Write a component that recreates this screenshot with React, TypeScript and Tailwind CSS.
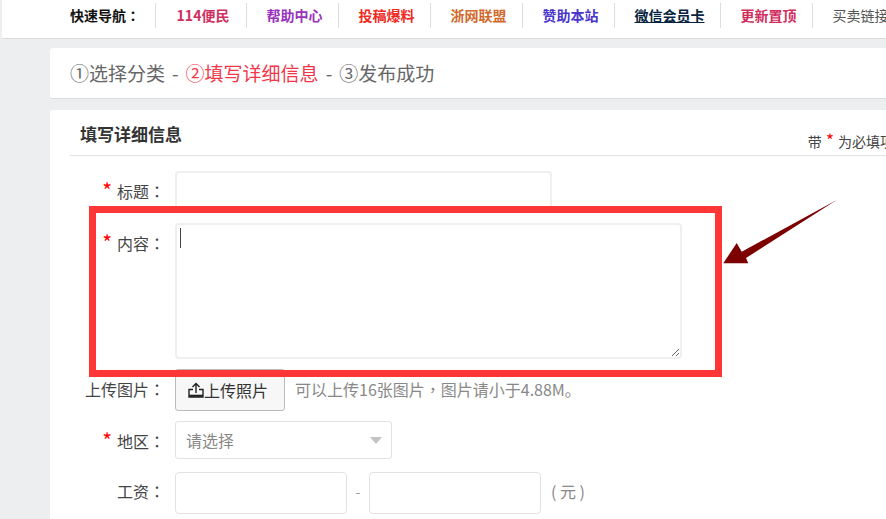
const font = { fontFamily: '"Noto Sans CJK SC", "Liberation Sans", sans-serif' };
const tc = { fontFamily: '"Noto Sans CJK TC", sans-serif' };

const navItems: { label: string; cls: string }[] = [
  { label: "114便民", cls: "font-bold text-[#d0305f] w-[91px]" },
  { label: "帮助中心", cls: "font-bold text-[#9933bb] w-[92px]" },
  { label: "投稿爆料", cls: "font-bold text-[#f02a1d] w-[92px]" },
  { label: "浙网联盟", cls: "font-bold text-[#d2692c] w-[92px]" },
  { label: "赞助本站", cls: "font-bold text-[#4a35cc] w-[92px]" },
  { label: "微信会员卡", cls: "font-bold text-[#06233f] underline w-[106px]" },
  { label: "更新置顶", cls: "font-bold text-[#d12c5c] w-[92px]" },
  { label: "买卖链接", cls: "text-[#555555] w-[92px]" },
];

function Label({ text, required }: { text: string; required?: boolean }) {
  return (
    <div className="w-[125px] shrink-0 pr-[10px] flex justify-end items-start text-[16px] leading-[20px] text-[#444444]">
      {required && <span className="text-[#ff0000] text-[21px] leading-[18px] mr-[5px]">*</span>}
      <span>{text}<span style={tc}>：</span></span>
    </div>
  );
}

export default function App() {
  return (
    <div className="w-[886px] h-[519px] overflow-hidden bg-[#edeef0] relative" style={font}>
      <div className="ml-[2px] h-[39px] bg-white border-b border-[#dddddd] flex items-start pt-[3px] pl-[68px] whitespace-nowrap overflow-hidden text-[14px]">
        <div className="w-[85px] h-[25px] shrink-0 flex items-center font-bold text-[#111111]">快速导航<span style={tc}>：</span></div>
        {navItems.map((n) => (
          <div key={n.label} className={`shrink-0 h-[25px] border-l border-[#dddddd] flex items-center justify-center pl-[4px] ${n.cls}`}>
            {n.label}
          </div>
        ))}
      </div>

      <div className="ml-[50px] w-[900px] mt-[9px] h-[51px] bg-white border-b border-[#dddddd] rounded-[3px] pl-[20px] flex items-center text-[19px] text-[#666666] whitespace-nowrap">
        <span>①选择分类</span>
        <span className="mx-[7px]">-</span>
        <span className="text-[#f2374a]">②填写详细信息</span>
        <span className="mx-[7px]">-</span>
        <span>③发布成功</span>
      </div>

      <div className="ml-[50px] w-[900px] mt-[11px] h-[420px] bg-white rounded-[3px] pl-[20px]">
        <div className="w-[860px] h-[46px] border-b border-[#e2e2e2] flex items-end justify-between pl-[10px] pb-[9px]">
          <span className="text-[17px] leading-[24px] font-bold text-[#333333]">填写详细信息</span>
          <span className="text-[14px] leading-[16px] text-[#444444] whitespace-nowrap mr-[36px] -mb-[3px]">
            带 <span className="text-[#ff0000] text-[17px] mx-[1px]">*</span> 为必填项
          </span>
        </div>

        <div className="-ml-[20px] flex items-start mt-[15px] h-[52px]">
          <div className="pt-[10px]"><Label text="标题" required /></div>
          <div className="w-[377px] h-[42px] border-2 border-[#efefef] rounded-[4px]" />
        </div>

        <div className="-ml-[20px] flex items-start h-[146px]">
          <div className="pt-[10px]"><Label text="内容" required /></div>
          <div className="relative">
            <textarea className="block w-[507px] h-[136px] border-2 border-[#efefef] rounded-[4px] outline-none resize" />
            <div className="absolute left-[5px] top-[5px] w-px h-[20px] bg-[#444444]" />
          </div>
        </div>

        <div className="-ml-[20px] flex items-start h-[52px]">
          <div className="pt-[10px]"><Label text="上传图片" /></div>
          <div className="w-[110px] h-[42px] bg-[#f7f7f7] border border-[#bbbbbb] rounded-[3px] flex items-center justify-center pr-[4px] pb-[1px] text-[16px] text-[#333333] whitespace-nowrap">
            <svg width="16" height="16" viewBox="0 0 16 16" fill="none" stroke="#222222" strokeWidth="1.4" className="shrink-0">
              <path d="M8 11V1.500M4.500 5 8 1.500 11.500 5" />
              <path d="M5 7.500H1v7.500h14V7.500H11" />
              <path d="M1 13.800h14" strokeWidth="2.200" />
            </svg>
            <span>上传照片</span>
          </div>
          <div className="ml-[10px] mt-[9px] text-[16px] leading-[22px] text-[#888888] whitespace-nowrap">
            可以上传16张图片<span style={tc}>，</span>图片请小于4.88M。
          </div>
        </div>

        <div className="-ml-[20px] flex items-start h-[51px]">
          <div className="pt-[10px]"><Label text="地区" required /></div>
          <div className="w-[217px] h-[38px] border border-[#e2e2e2] rounded-[3px] flex items-center justify-between pl-[10px] pr-[9px] text-[16px] text-[#888888]">
            <span>请选择</span>
            <span className="w-0 h-0 border-x-[6px] border-x-transparent border-t-[7px] border-t-[#c4c4c4]" />
          </div>
        </div>

        <div className="-ml-[20px] flex items-start">
          <div className="pt-[9px]"><Label text="工资" /></div>
          <div className="w-[172px] h-[42px] border border-[#e2e2e2] rounded-[4px]" />
          <div className="w-[22px] text-center text-[14px] leading-[39px] text-[#999999]">-</div>
          <div className="w-[172px] h-[42px] border border-[#e2e2e2] rounded-[4px]" />
          <div className="ml-[10px] text-[16px] leading-[39px] text-[#888888] whitespace-pre">( 元 )</div>
        </div>
      </div>

      <div className="absolute left-[89px] top-[206px] w-[633px] h-[171px] border-[7px] border-[#fe3636]" />
      <svg className="absolute left-[720px] top-[195px]" width="120" height="75" viewBox="0 0 120 75">
        <path d="M3.300 68.300 16.700 48 21.700 56.700 116.700 5 26 63 28.300 68.300Z" fill="#7d0000" />
      </svg>
    </div>
  );
}
